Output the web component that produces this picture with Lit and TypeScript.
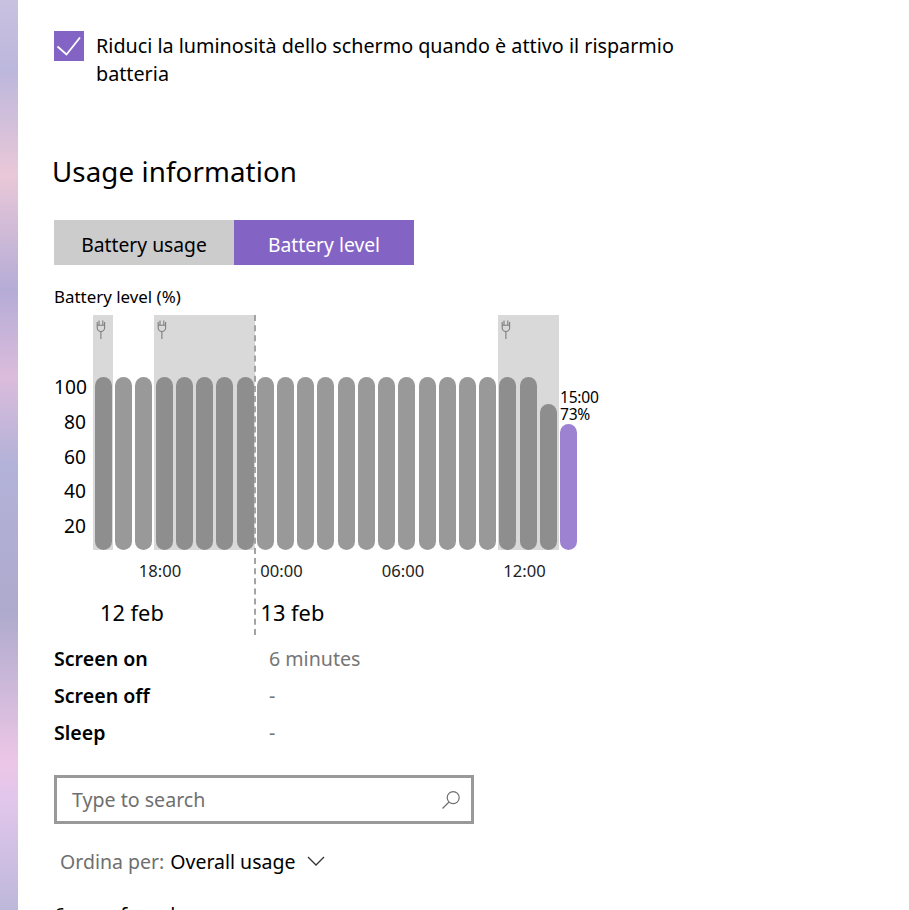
import { LitElement, html, css, svg } from "lit";
import { customElement } from "lit/decorators.js";

const HEIGHTS = Array.from({ length: 24 }, (_, i) => (i === 22 ? 146 : i === 23 ? 126 : 173));
const inBand = (i: number) => i === 0 || (i >= 3 && i <= 7) || (i >= 20 && i <= 22);
const BANDS = [
  { left: 0, width: 20 },
  { left: 61, width: 101 },
  { left: 405, width: 61 },
];
const plug = svg`<svg class="plug" width="10" height="20" viewBox="0 0 10 20" fill="none" stroke="#7f7f7f" stroke-width="1.1"><path d="M1.2 2v3.2h7.4V2M3 0.5v4.5M6.8 0.5v4.5M1.2 5.2v2.6a3.7 3.7 0 0 0 7.4 0V5.2M4.9 11.5V19"/></svg>`;

@customElement("app-root")
export class AppRoot extends LitElement {
  static styles = css`
    :host {
      display: flex;
      width: 909px;
      height: 910px;
      overflow: hidden;
      background: #fff;
      color: #000;
      font-family: "Noto Sans", "Open Sans", sans-serif;
    }
    .rail {
      width: 18px;
      flex: none;
      background: linear-gradient(
        180deg,
        #c9c1e0 0,
        #bcb7dc 70px,
        #e9c8d8 175px,
        #b5acd6 290px,
        #dbbcdc 377px,
        #b3b2d8 464px,
        #adaacd 610px,
        #ecc6e6 760px,
        #e2c6ec 800px,
        #bdb8da 910px
      );
    }
    main {
      flex: 1;
      padding: 31px 0 0 36px;
      min-width: 0;
    }
    .check {
      display: flex;
      gap: 12px;
      width: 640px;
    }
    .box {
      flex: none;
      width: 30px;
      height: 30px;
      background: #8364c4;
      display: flex;
      align-items: center;
      justify-content: center;
    }
    .check p {
      margin: 0;
      font-size: 19.75px;
      line-height: 28px;
      margin-top: 1px;
    }
    h2 {
      margin: 64px 0 0 -2px;
      font-size: 27.7px;
      line-height: 38px;
      font-weight: 400;
      letter-spacing: 0.1px;
    }
    .tabs {
      display: flex;
      margin-top: 30px;
    }
    .tab {
      width: 180px;
      height: 45px;
      padding-top: 3px;
      box-sizing: border-box;
      display: flex;
      align-items: center;
      justify-content: center;
      font-size: 19.3px;
      background: #cccccc;
    }
    .tab.on {
      background: #8364c4;
      color: #fff;
    }
    .chart-title {
      margin-top: 20px;
      height: 30px;
      font-size: 16.9px;
      line-height: 24px;
    }
    .chart {
      position: relative;
    }
    .graph {
      display: flex;
    }
    .yaxis {
      width: 32px;
      padding-top: 55px;
      flex: none;
      font-size: 19.2px;
      line-height: 34.75px;
      text-align: right;
    }
    .plot {
      position: relative;
      margin-left: 7px;
      width: 520px;
      height: 235px;
    }
    .band {
      position: absolute;
      top: 0;
      bottom: 0;
      background: #d9d9d9;
    }
    .plug {
      position: absolute;
      top: 5px;
      left: 3px;
    }
    .bars {
      position: absolute;
      inset: 0 0 0 2px;
      display: flex;
      align-items: flex-end;
      gap: 3.23px;
    }
    .bar {
      width: 17px;
      flex: none;
      border-radius: 8.5px;
      background: #999999;
    }
    .bar.dark {
      background: #8e8e8e;
    }
    .bar.now {
      background: #9d82d2;
    }
    .now-label {
      position: absolute;
      left: 467px;
      top: 74px;
      font-size: 15.6px;
      line-height: 17px;
      letter-spacing: -0.25px;
    }
    .times {
      display: flex;
      padding: 9px 0 0 45.25px;
    }
    .times span {
      width: 121.5px;
      text-align: center;
      font-size: 16.6px;
      line-height: 24px;
      color: #222;
    }
    .dates {
      display: flex;
      padding: 15px 0 0 46px;
      font-size: 21.8px;
      line-height: 30px;
    }
    .dates span {
      width: 160.5px;
    }
    .divider {
      position: absolute;
      left: 200px;
      top: 0;
      height: 320px;
      border-left: 2px dashed #a3a3a3;
    }
    .stats {
      display: grid;
      grid-template-columns: 215px 1fr;
      grid-auto-rows: 37px;
      margin-top: 12px;
      font-size: 19.6px;
      line-height: 37px;
    }
    .stats b {
      font-weight: 600;
    }
    .stats span {
      color: #767676;
    }
    .search {
      margin-top: 24px;
      width: 420px;
      height: 49px;
      border: 3px solid #999999;
      display: flex;
      align-items: center;
      justify-content: space-between;
      padding: 0 10px 0 15px;
      font-size: 19.6px;
      color: #6f6f6f;
      box-sizing: border-box;
    }
    .sort {
      display: flex;
      align-items: center;
      margin: 22px 0 0 6px;
      height: 30px;
      font-size: 19.5px;
    }
    .sort .k {
      color: #6f6f6f;
    }
    .sort .v {
      margin-left: 6px;
    }
    .sort svg {
      margin-left: 12px;
    }
    .found {
      margin-top: 25px;
      font-size: 19.7px;
      line-height: 28px;
    }
  `;

  render() {
    return html`
      <div class="rail"></div>
      <main>
        <div class="check">
          <div class="box">
            <svg width="26" height="26" viewBox="0 0 26 26" fill="none" stroke="#fff" stroke-width="1.8"><path d="M1.5 13.5L10.5 21.5 24 4.5"/></svg>
          </div>
          <p>Riduci la luminosità dello schermo quando è attivo il risparmio batteria</p>
        </div>
        <h2>Usage information</h2>
        <div class="tabs">
          <div class="tab">Battery usage</div>
          <div class="tab on">Battery level</div>
        </div>
        <div class="chart-title">Battery level (%)</div>
        <div class="chart">
          <div class="graph">
            <div class="yaxis">
              <div>100</div><div>80</div><div>60</div><div>40</div><div>20</div>
            </div>
            <div class="plot">
              ${BANDS.map((b) => html`<div class="band" style="left:${b.left}px;width:${b.width}px">${plug}</div>`)}
              <div class="bars">
                ${HEIGHTS.map(
                  (h, i) => html`<div class="bar ${i === 23 ? "now" : inBand(i) ? "dark" : ""}" style="height:${h}px"></div>`
                )}
              </div>
              <div class="now-label">15:00<br />73%</div>
            </div>
          </div>
          <div class="times"><span>18:00</span><span>00:00</span><span>06:00</span><span>12:00</span></div>
          <div class="dates"><span>12 feb</span><span>13 feb</span></div>
          <div class="divider"></div>
        </div>
        <div class="stats">
          <b>Screen on</b><span>6 minutes</span>
          <b>Screen off</b><span>-</span>
          <b>Sleep</b><span>-</span>
        </div>
        <div class="search">
          <span>Type to search</span>
          <svg width="20" height="20" viewBox="0 0 20 20" fill="none" stroke="#6f6f6f" stroke-width="1.2"><circle cx="12.2" cy="7.6" r="6"/><path d="M8 12L1.5 18.5"/></svg>
        </div>
        <div class="sort">
          <span class="k">Ordina per:</span><span class="v">Overall usage</span>
          <svg width="18" height="10" viewBox="0 0 18 10" fill="none" stroke="#333" stroke-width="1.3"><path d="M1 1l8 8 8-8"/></svg>
        </div>
        <div class="found">6 apps found</div>
      </main>
    `;
  }
}
